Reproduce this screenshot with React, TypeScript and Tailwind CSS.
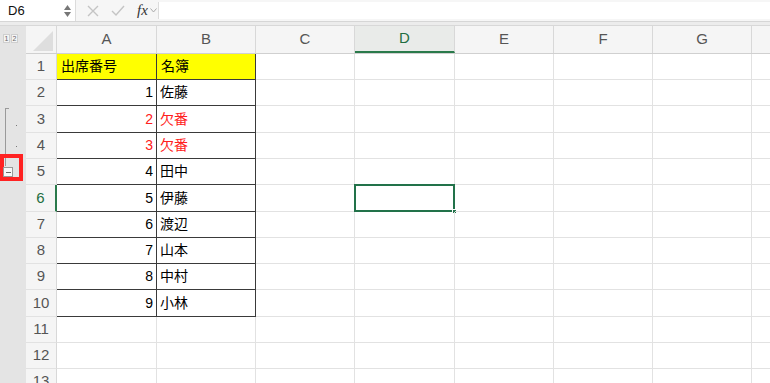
import React from 'react';

const cols = [
  { name: 'A', w: 'w-[100px]' },
  { name: 'B', w: 'w-[99px]' },
  { name: 'C', w: 'w-[99px]' },
  { name: 'D', w: 'w-[100px]' },
  { name: 'E', w: 'w-[99px]' },
  { name: 'F', w: 'w-[99px]' },
  { name: 'G', w: 'w-[99px]' },
  { name: '', w: 'w-[99px]' },
];

const rowH = ['h-[26px]', 'h-[26px]', 'h-[27px]', 'h-[26px]', 'h-[26px]', 'h-[27px]', 'h-[26px]', 'h-[26px]', 'h-[26px]', 'h-[27px]', 'h-[26px]', 'h-[26px]', 'h-[26px]'];

const data: Record<number, [string, string, boolean]> = {
  2: ['1', '佐藤', false],
  3: ['2', '欠番', true],
  4: ['3', '欠番', true],
  5: ['4', '田中', false],
  6: ['5', '伊藤', false],
  7: ['6', '渡辺', false],
  8: ['7', '山本', false],
  9: ['8', '中村', false],
  10: ['9', '小林', false],
};

const font = { fontFamily: '"Liberation Sans", "Noto Sans CJK JP", sans-serif' };

const App: React.FC = () => {
  return (
    <div className="w-[770px] h-[383px] overflow-hidden bg-white text-[#222]" style={font}>
      {/* formula bar */}
      <div className="flex h-[22px] items-stretch bg-[#f6f6f6] border-b border-[#d6d6d6]">
        <div className="w-[76px] flex items-center justify-between bg-white border-r border-[#dcdcdc] pl-[8px] pr-[4px]">
          <span className="text-[13px] text-[#111]">D6</span>
          <div className="flex flex-col items-center leading-none text-[#666]">
            <svg width="7" height="5" viewBox="0 0 7 5"><path d="M3.5 0 L7 5 L0 5Z" fill="#777" /></svg>
            <svg width="7" height="5" viewBox="0 0 7 5" className="mt-[2px]"><path d="M0 0 L7 0 L3.5 5Z" fill="#777" /></svg>
          </div>
        </div>
        <div className="w-[82px] flex items-center pl-[11px] gap-[12px]">
          <svg width="12" height="12" viewBox="0 0 12 12"><path d="M1 1 L11 11 M11 1 L1 11" stroke="#c4c4c4" strokeWidth="1.4" /></svg>
          <svg width="14" height="12" viewBox="0 0 14 12"><path d="M1 6 L5 10 L13 1" stroke="#c4c4c4" strokeWidth="1.4" fill="none" /></svg>
          <div className="flex items-center gap-[2px]">
            <span className="italic text-[15px] text-[#333]" style={{ fontFamily: '"Liberation Serif", serif' }}>fx</span>
            <svg width="7" height="5" viewBox="0 0 7 5"><path d="M0.5 0.5 L3.5 4 L6.5 0.5" stroke="#aaa" fill="none" /></svg>
          </div>
        </div>
        <div className="flex-1 bg-white border-l border-[#dcdcdc] my-[2px]" />
      </div>
      <div className="h-[4px] bg-[#ececec] border-b border-[#d8d8d8]" />

      <div className="flex">
        {/* outline column */}
        <div className="w-[26px] shrink-0 bg-[#e4e4e4] relative h-[357px]">
          <div className="flex gap-[1px] pl-[3px] pt-[8px]">
            <span className="w-[7px] h-[9px] bg-[#f4f4f4] border border-[#cfcfcf] text-[7px] leading-[7px] text-center text-[#666]">1</span>
            <span className="w-[7px] h-[9px] bg-[#f4f4f4] border border-[#cfcfcf] text-[7px] leading-[7px] text-center text-[#666]">2</span>
          </div>
          <div className="absolute left-[5px] top-[82px] w-[4px] h-[58px] border-l border-t border-[#9a9a9a]" />
          <div className="absolute left-[16px] top-[99px] w-[1px] h-[1px] bg-[#777]" />
          <div className="absolute left-[16px] top-[120px] w-[1px] h-[1px] bg-[#777]" />
          <div className="absolute left-[0px] top-[128px] w-[23px] h-[27px] border-[4px] border-[#f22]" />
          <div className="absolute left-[3px] top-[141px] w-[10px] h-[10px] bg-[#f8f8f8] border border-[#999] flex items-center justify-center">
            <div className="w-[5px] h-[1px] bg-[#666]" />
          </div>
        </div>

        {/* grid */}
        <div className="flex-1 min-w-0 overflow-hidden">
          {/* header row */}
          <div className="flex h-[28px] bg-[#f5f5f5] border-b border-[#d0d0d0]">
            <div className="w-[31px] shrink-0 border-r border-[#d8d8d8] relative overflow-hidden">
              <svg width="31" height="28" className="absolute inset-0"><path d="M7 25 L27 25 L27 5 Z" fill="#dedede" /></svg>
            </div>
            {cols.map((c, ci) => (
              <div
                key={ci}
                className={`${c.w} shrink-0 flex items-center justify-center text-[15px] border-r border-[#d8d8d8] ${
                  c.name === 'D' ? 'text-[#1e6e41] border-b-2 border-b-[#2a7a4b] bg-[#e9ebe9]' : 'text-[#555]'
                }`}
              >
                {c.name}
              </div>
            ))}
          </div>

          {rowH.map((h, i) => {
            const r = i + 1;
            const sel = r === 6;
            const d = data[r];
            return (
              <div key={r} className={`flex ${h}`}>
                <div
                  className={`w-[31px] shrink-0 flex items-center justify-center text-[15px] bg-[#f5f5f5] border-b border-[#e2e2e2] ${
                    sel ? 'text-[#1e6e41] border-r-2 border-r-[#2a7a4b]' : 'text-[#555] border-r border-r-[#d8d8d8]'
                  }`}
                >
                  {r}
                </div>
                {cols.map((c, ci) => {
                  const inData = ci < 2 && r <= 10;
                  const base = inData
                    ? `border-r border-b border-[#3a3a3a] ${r === 1 ? 'bg-[#ffff00]' : ''}`
                    : 'border-r border-b border-[#e2e2e2]';
                  let content: React.ReactNode = null;
                  if (r === 1 && ci === 0) content = <span className="pl-[4px] text-[14px] text-black">出席番号</span>;
                  if (r === 1 && ci === 1) content = <span className="pl-[4px] text-[14px] text-black">名簿</span>;
                  if (d && ci === 0)
                    content = (
                      <span className={`ml-auto pr-[3px] text-[14px] ${d[2] ? 'text-[#ff2020]' : 'text-black'}`}>{d[0]}</span>
                    );
                  if (d && ci === 1)
                    content = <span className={`pl-[3px] text-[14px] ${d[2] ? 'text-[#ff2020]' : 'text-black'}`}>{d[1]}</span>;
                  const selected = sel && c.name === 'D';
                  return (
                    <div key={ci} className={`${c.w} shrink-0 flex items-center relative ${base}`}>
                      {content}
                      {selected && (
                        <>
                          <div className="absolute left-[-1px] top-[-1px] right-[-1px] bottom-[-1px] border-2 border-[#22724a]" />
                          <div className="absolute right-[-3px] bottom-[-3px] w-[5px] h-[5px] bg-[#22724a] border border-white" />
                        </>
                      )}
                    </div>
                  );
                })}
              </div>
            );
          })}
        </div>
      </div>
    </div>
  );
};

export default App;
